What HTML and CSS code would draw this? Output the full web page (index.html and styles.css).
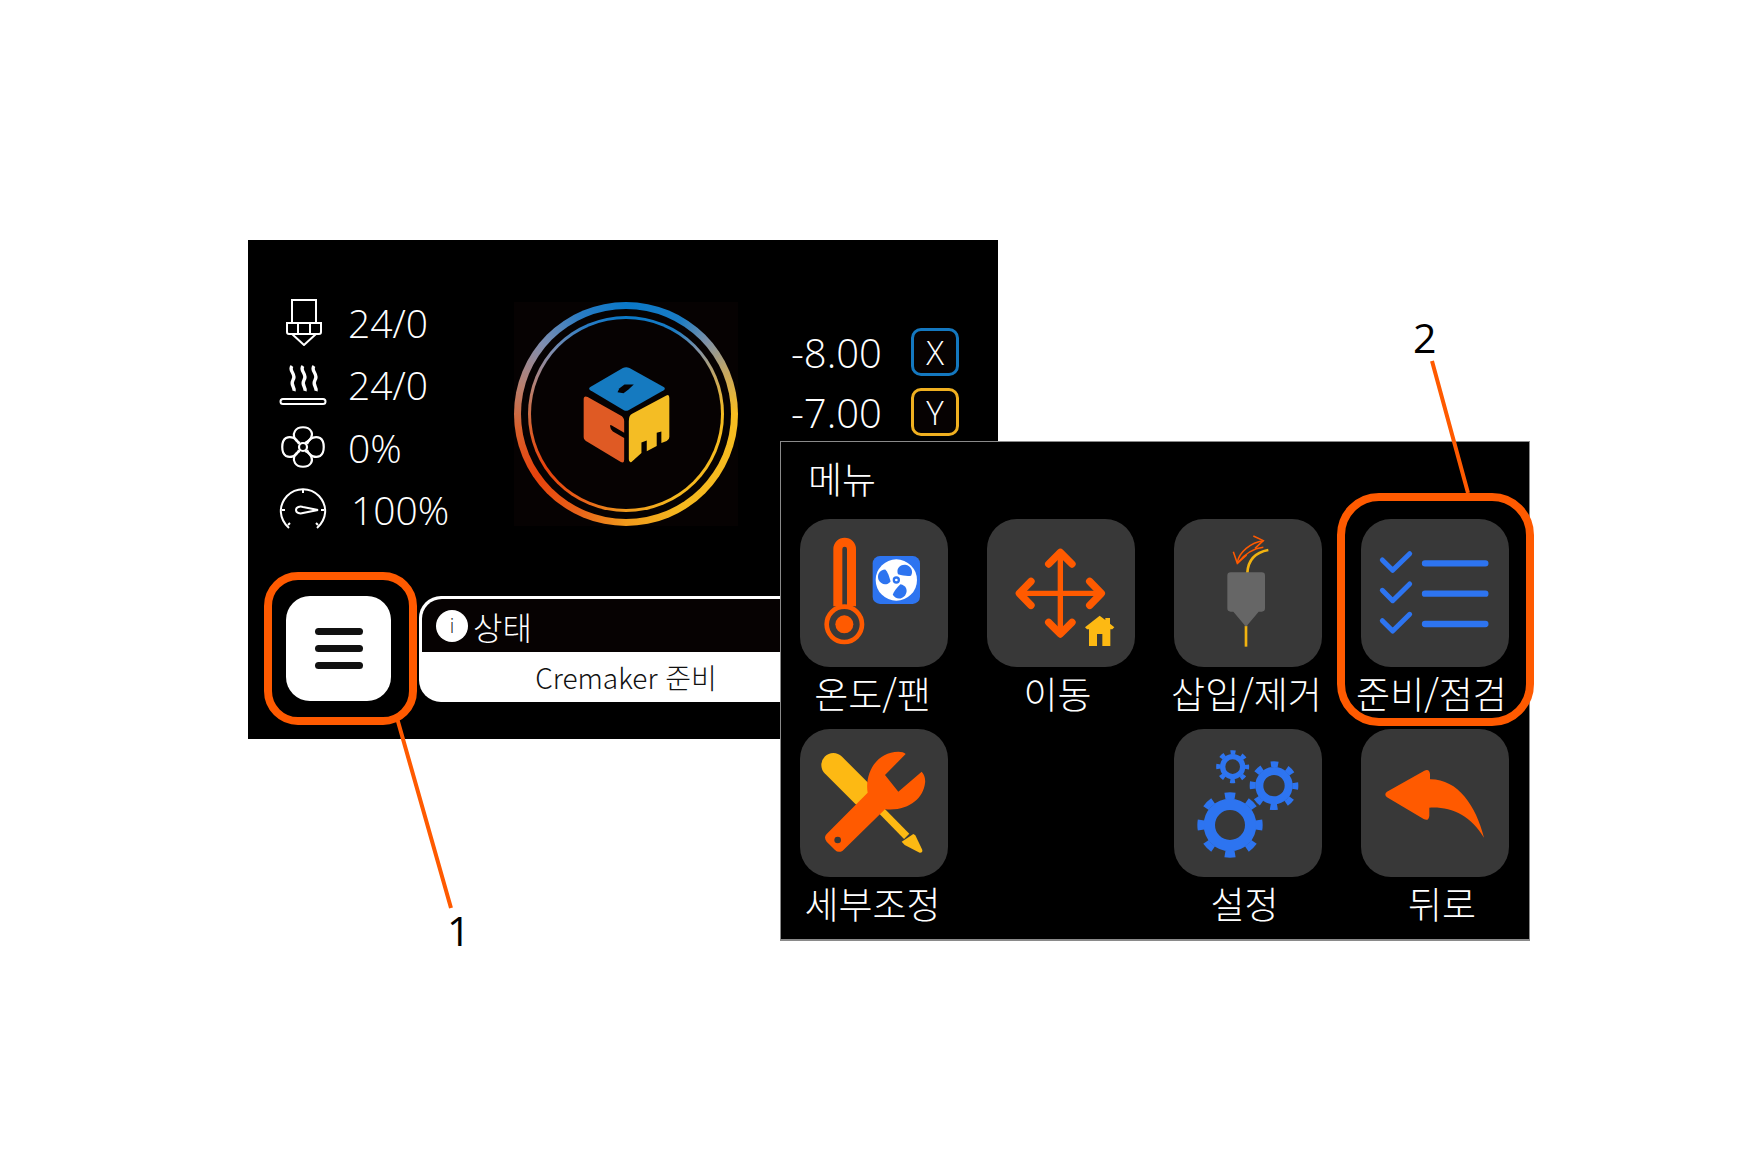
FILE: index.html
```html
<!DOCTYPE html>
<html lang="ko">
<head>
<meta charset="utf-8">
<title>메뉴</title>
<link rel="stylesheet" href="styles.css">
</head>
<body>
<main class="canvas">

  <section class="window status-window">
    <div class="top-row">
      <div class="stats">
        <div class="stat">
          <svg class="stat-icon" viewBox="0 0 48 48" fill="none" stroke="#fff" stroke-width="2">
            <path d="M13 2h24v23H13z"/><path d="M8 25h34v9a2 2 0 0 1-2 2H10a2 2 0 0 1-2-2z"/><path d="M19 25v11M31 25v11"/><path d="M13 36l12 11 12-11"/>
          </svg>
          <span>24/0</span>
        </div>
        <div class="stat">
          <svg class="stat-icon" viewBox="0 0 48 48" fill="none" stroke="#fff">
            <g stroke-width="3.4"><path d="M13 5c-4 5 5 8 1 14-3 5 2 7 1 11"/><path d="M24 5c-4 5 5 8 1 14-3 5 2 7 1 11"/><path d="M35 5c-4 5 5 8 1 14-3 5 2 7 1 11"/></g>
            <rect x="1.500" y="38" width="45" height="5" rx="2.500" stroke-width="2"/>
          </svg>
          <span>24/0</span>
        </div>
        <div class="stat">
          <svg class="stat-icon" viewBox="0 0 48 48" fill="none" stroke="#fff" stroke-width="2.200">
            <circle cx="24" cy="24" r="4"/>
            <path d="M21 20c-7-3-7-9-5-12 3-5 13-5 16 0 2 3 1 9-6 12"/>
            <path d="M21 28c-7 3-7 9-5 12 3 5 13 5 16 0 2-3 1-9-6-12"/>
            <path d="M20 21c-3-7-9-8-13-6-5 3-5 15 0 18 4 2 10 1 13-6"/>
            <path d="M28 21c3-7 9-8 13-6 5 3 5 15 0 18-4 2-10 1-13-6"/>
          </svg>
          <span>0%</span>
        </div>
        <div class="stat">
          <svg class="stat-icon" viewBox="0 0 48 48" fill="none" stroke="#fff" stroke-width="2">
            <path d="M10 42C0 33-1 20 8 10c9-9 23-9 32 0 9 10 8 23-2 32"/>
            <path d="M24 3v4M3 24h3M45 24h-3M9 39l2-2M39 39l-2-2"/>
            <path d="M17 24c0-3 4-4 7-3l15 3-15 3c-3 1-7 0-7-3z"/>
          </svg>
          <span class="stat-wide">100%</span>
        </div>
      </div>

      <div class="logo">
        <div class="ring ring-outer">
          <div class="ring-gap">
            <div class="ring ring-inner">
              <div class="ring-core">
                <svg class="cube" viewBox="250 228 262 290">
                  <path fill="#157ac0" d="M370 233q10-5 20 0l103 57q7 5 0 10L387 360q-7 3-14 0L272 300q-7-5 0-10z"/>
                  <path fill="#060202" d="M360 294l15-11 28 0-16 15-15 11-18-3z"/>
                  <path fill="#df5a24" d="M252 327q0-12 12-7l98 55q12 6 12 18v35l-36-21q-8-6-6 3 0 8 8 14l34 20v65q0 12-10 7l-100-60q-12-6-12-15z"/>
                  <path fill="#f4bd24" d="M388 393q0-18 10-22l103-55q9-5 9 7v118q0 8-8 12l-16 6v-35l-14 4v40l-30 16v-33l-16 6v32l-30 27q-8 3-8-8z"/>
                </svg>
              </div>
            </div>
          </div>
        </div>
      </div>

      <div class="axes">
        <div class="axis">
          <span class="axis-value">-8.00</span>
          <span class="axis-key axis-x">X</span>
        </div>
        <div class="axis">
          <span class="axis-value">-7.00</span>
          <span class="axis-key axis-y">Y</span>
        </div>
      </div>
    </div>

    <div class="bottom-row">
      <div class="menu-button">
        <span class="menu-bar"></span>
        <span class="menu-bar"></span>
        <span class="menu-bar"></span>
      </div>
      <div class="status-card">
        <div class="status-head">
          <span class="info-dot">i</span>
          <span>상태</span>
        </div>
        <div class="status-body">Cremaker 준비</div>
      </div>
    </div>
  </section>

  <section class="window menu-window">
    <h1 class="menu-title">메뉴</h1>
    <div class="menu-grid">

      <div class="tile">
        <div class="tile-box">
          <svg viewBox="0 0 444 444">
            <path fill="none" stroke="#ff5a00" stroke-width="27" d="M113.500 262V90a20.500 20.500 0 0 1 41 0v172"/>
            <circle cx="133" cy="316" r="53" fill="#383838" stroke="#ff5a00" stroke-width="14"/>
            <circle cx="133" cy="316" r="27" fill="#ff5a00"/>
            <rect x="218" y="111" width="142" height="144" rx="22" fill="#2d74f0"/>
            <circle cx="289" cy="183" r="62" fill="#fff"/>
            <g fill="#2d74f0">
              <path id="blade" d="M294 166c-6-16 4-30 22-29 17 3 25 19 17 33-9 3-24 0-39-4z"/>
              <path d="M294 166c-6-16 4-30 22-29 17 3 25 19 17 33-9 3-24 0-39-4z" transform="rotate(120 289 183)"/>
              <path d="M294 166c-6-16 4-30 22-29 17 3 25 19 17 33-9 3-24 0-39-4z" transform="rotate(240 289 183)"/>
              <circle cx="289" cy="183" r="11"/>
            </g>
            <circle cx="289" cy="183" r="4" fill="#fff"/>
          </svg>
        </div>
        <div class="tile-label">온도/팬</div>
      </div>

      <div class="tile">
        <div class="tile-box">
          <svg viewBox="0 0 444 444" fill="none" stroke="#ff5a00" stroke-linecap="round" stroke-linejoin="round">
            <path stroke-width="16" d="M220 100v246M96 223h248"/>
            <path stroke-width="22" d="M185 135l35-35 35 35M185 310l35 35 35-35M132 187l-35 36 35 36M308 187l35 36-35 36"/>
            <path fill="#fdb913" stroke="none" d="M338 290l17 13v-6h14v17l13 11-6 6h-6v50h-24v-36h-16v36h-24v-50h-6l-6-6z"/>
          </svg>
        </div>
        <div class="tile-label label-left">이동</div>
      </div>

      <div class="tile">
        <div class="tile-box">
          <svg viewBox="0 0 444 444" fill="none">
            <path stroke="#f2b310" stroke-width="8" d="M220 162c2-38 25-62 63-69"/>
            <path stroke="#f2b310" stroke-width="8" d="M216 320v63"/>
            <path fill="#666" d="M170 160h93q10 0 10 10v98q0 10-10 10h-9l-38 45-38-45h-8q-10 0-10-10v-98q0-10 10-10z"/>
            <g stroke="#ff5a00" stroke-width="4.500">
              <path d="M190 130c5-30 40-60 78-65"/><path d="M238 51l30 14-25 23"/>
              <path d="M190 133c25-32 50-45 78-48"/><path d="M178 98l12 35 28-25"/>
            </g>
          </svg>
        </div>
        <div class="tile-label">삽입/제거</div>
      </div>

      <div class="tile">
        <div class="tile-box">
          <svg viewBox="0 0 444 444" fill="none" stroke="#2d74f0" stroke-linecap="round" stroke-linejoin="round">
            <g stroke-width="15">
              <path d="M64 123l31 31 51-50"/><path d="M64 214l31 31 51-50"/><path d="M64 305l31 31 51-50"/>
            </g>
            <g stroke-width="19">
              <path d="M192 133h181M192 224h181M192 315h181"/>
            </g>
          </svg>
        </div>
        <div class="tile-label label-left">준비/점검</div>
      </div>

      <div class="tile">
        <div class="tile-box">
          <svg viewBox="0 0 444 444">
            <path fill="none" stroke="#fdb913" stroke-width="72" stroke-linecap="round" d="M100 108l90 90"/>
            <path fill="none" stroke="#fdb913" stroke-width="22" d="M210 210l110 112"/>
            <path fill="#fdb913" d="M305 338l35-23 6 4 21 44q1 9-8 8l-45-23z"/>
            <path fill="#ff5a00" transform="translate(-90 -57)" d="M170 372L293 248c-10-58 27-123 92-123q15 0 22 7l-62 63 40 50 70-60q13 15 10 35c-5 45-50 85-120 78L218 422q-13 8-23-2l-25-25q-10-13 0-23z"/>
            <circle cx="113" cy="333" r="10" fill="#383838"/>
          </svg>
        </div>
        <div class="tile-label">세부조정</div>
      </div>

      <div class="tile tile-empty"></div>

      <div class="tile">
        <div class="tile-box">
          <svg viewBox="0 0 444 444" fill="none" stroke="#2d74f0">
            <g>
              <circle cx="168" cy="288" r="62" stroke-width="34"/>
              <circle cx="168" cy="288" r="88" stroke-width="20" pathLength="80" stroke-dasharray="4.400 5.600" stroke-dashoffset="2.200"/>
            </g>
            <g>
              <circle cx="300" cy="170" r="44" stroke-width="24"/>
              <circle cx="300" cy="170" r="64" stroke-width="18" pathLength="80" stroke-dasharray="4.400 5.600" stroke-dashoffset="2.200"/>
            </g>
            <g>
              <circle cx="176" cy="113" r="30" stroke-width="16"/>
              <circle cx="176" cy="113" r="43" stroke-width="13" pathLength="80" stroke-dasharray="4.400 5.600" stroke-dashoffset="2.200"/>
            </g>
          </svg>
        </div>
        <div class="tile-label label-left">설정</div>
      </div>

      <div class="tile">
        <div class="tile-box">
          <svg viewBox="0 0 444 444">
            <path fill="#ff5a00" d="M78 188l112-63q15-7 17 10v16c83-1 138 79 162 175-39-66-99-94-164-90v24q-2 18-17 10L78 205q-10-9 0-17z"/>
          </svg>
        </div>
        <div class="tile-label label-right">뒤로</div>
      </div>

    </div>
  </section>

  <svg class="callouts" viewBox="0 0 1748 1165" fill="none" stroke="#ff5a00">
    <rect x="268" y="576" width="145" height="145" rx="30" stroke-width="8"/>
    <rect x="1341" y="497" width="189" height="225" rx="38" stroke-width="8"/>
    <path stroke-width="4" d="M397 718l54 190M1432 361l36 132"/>
  </svg>
  <span class="callout-number number-one">1</span>
  <span class="callout-number number-two">2</span>

</main>
</body>
</html>
```

FILE: styles.css
```css
* {
  box-sizing: border-box;
}

html,
body {
  margin: 0;
  background: #fff;
}

body {
  font-family: "Open Sans", "Noto Sans CJK KR", sans-serif;
  color: #fff;
}

.canvas {
  position: relative;
  width: 1748px;
  height: 1165px;
  overflow: hidden;
}

.window {
  position: absolute;
  width: 750px;
  background: #000;
}

.status-window {
  left: 248px;
  top: 240px;
  height: 499px;
  padding: 51px 0 0 31px;
  overflow: hidden;
}

.menu-window {
  left: 780px;
  top: 441px;
  height: 500px;
  padding: 0 0 0 19px;
  border: 1px solid #8a8a8a;
  border-bottom-width: 2px;
}

.top-row {
  display: flex;
  align-items: flex-start;
  height: 250px;
}

.stats {
  width: 235px;
  flex: none;
}

.stat {
  display: flex;
  align-items: center;
  gap: 21px;
  height: 62.5px;
  font-size: 39px;
  font-weight: 300;
}

.stat-icon {
  width: 48px;
  height: 48px;
  flex: none;
}

.stat-wide {
  margin-left: 3px;
}

.logo {
  width: 224px;
  height: 224px;
  flex: none;
  margin-top: 11px;
  background: #060202;
}

.ring {
  background: conic-gradient(#0a78c8 0deg, #1a7cc4 30deg, #7f92a8 48deg, #c8a860 68deg, #f7bd20 90deg, #f5b81f 150deg, #f09a1c 180deg, #e8641a 205deg, #e8420c 235deg, #d8602c 262deg, #b88070 285deg, #7f8eb0 310deg, #2a7cc4 335deg, #0a78c8 360deg);
  border-radius: 50%;
}

.ring-outer {
  width: 224px;
  height: 224px;
  padding: 7px;
}

.ring-gap {
  width: 100%;
  height: 100%;
  padding: 7px;
  background: #060202;
  border-radius: 50%;
}

.ring-inner {
  width: 100%;
  height: 100%;
  padding: 3px;
}

.ring-core {
  display: flex;
  align-items: center;
  justify-content: center;
  width: 100%;
  height: 100%;
  background: #060202;
  border-radius: 50%;
}

.cube {
  width: 87px;
  height: 97px;
}

.axes {
  margin: 31px 0 0 53px;
}

.axis {
  display: flex;
  align-items: center;
  height: 60px;
}

.axis-value {
  width: 120px;
  font-size: 40px;
  font-weight: 300;
  white-space: nowrap;
}

.axis-key {
  display: flex;
  align-items: center;
  justify-content: center;
  width: 48px;
  height: 48px;
  border: 3px solid;
  border-radius: 10px;
  background: #060202;
  font-size: 33px;
  font-weight: 300;
}

.axis-x {
  border-color: #1478c0;
}

.axis-y {
  border-color: #f0b020;
}

.bottom-row {
  display: flex;
  gap: 28px;
  margin: 55px 0 0 7px;
}

.menu-button {
  display: flex;
  flex-direction: column;
  align-items: center;
  justify-content: center;
  gap: 10px;
  width: 105px;
  height: 105px;
  flex: none;
  background: #fff;
  border-radius: 24px;
}

.menu-bar {
  width: 48px;
  height: 7px;
  background: #111;
  border-radius: 4px;
}

.status-card {
  width: 414px;
  height: 106px;
  flex: none;
  border-radius: 22px;
  overflow: hidden;
  background: #fff;
}

.status-head {
  display: flex;
  align-items: center;
  gap: 5px;
  height: 53px;
  margin: 3px 0 0 3px;
  padding-left: 14px;
  background: #060202;
  border-radius: 20px 0 0 0;
  font-family: "Noto Sans CJK KR", sans-serif;
  font-size: 32px;
  font-weight: 300;
}

.info-dot {
  display: flex;
  align-items: center;
  justify-content: center;
  width: 32px;
  height: 32px;
  background: #fff;
  border-radius: 50%;
  color: #222;
  font-family: "Open Sans", sans-serif;
  font-size: 20px;
  font-weight: 300;
}

.status-body {
  display: flex;
  align-items: center;
  justify-content: center;
  height: 50px;
  color: #111;
  font-family: "Noto Sans CJK KR", sans-serif;
  font-size: 28px;
  font-weight: 300;
}

.menu-title {
  height: 77px;
  margin: 0;
  padding-left: 8px;
  font-family: "Noto Sans CJK KR", sans-serif;
  font-size: 37px;
  font-weight: 300;
  line-height: 72px;
}

.menu-grid {
  display: grid;
  grid-template-columns: repeat(4, 148px);
  column-gap: 39px;
  row-gap: 10px;
}

.tile {
  width: 148px;
  height: 200px;
}

.tile-box {
  width: 148px;
  height: 148px;
  background: #383838;
  border-radius: 30px;
}

.tile-box svg {
  display: block;
  width: 148px;
  height: 148px;
}

.tile-label {
  display: flex;
  justify-content: center;
  height: 52px;
  padding-right: 3px;
  font-family: "Noto Sans CJK KR", sans-serif;
  font-size: 37px;
  font-weight: 300;
  line-height: 52px;
  white-space: nowrap;
}

.label-left {
  padding-right: 7px;
}

.label-right {
  padding: 0 0 0 14px;
}

.callouts {
  position: absolute;
  inset: 0;
  width: 1748px;
  height: 1165px;
  pointer-events: none;
}

.callout-number {
  position: absolute;
  color: #000;
  font-size: 41px;
  line-height: 1;
}

.number-one {
  left: 447px;
  top: 910px;
}

.number-two {
  left: 1413px;
  top: 317px;
}
```
